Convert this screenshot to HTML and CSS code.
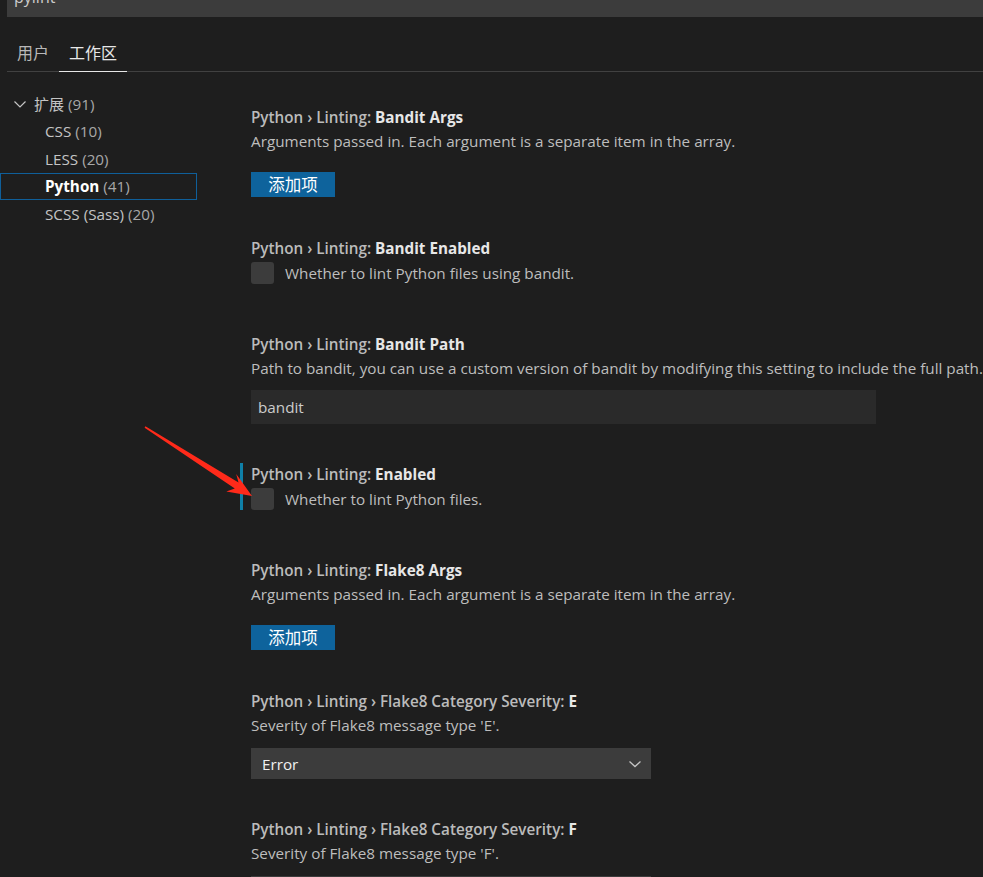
FILE: index.html
```html
<!DOCTYPE html>
<html lang="zh-CN">
<head>
<meta charset="utf-8">
<title>Settings</title>
<link rel="stylesheet" href="styles.css">
</head>
<body>
<div class="page">
  <div class="search"><div class="search-text">pylint</div></div>
  <div class="tabs">
    <div class="tab cjk">用户</div>
    <div class="tab cjk active">工作区</div>
  </div>
  <div class="main">
    <div class="tree">
      <div class="row group">
        <svg class="chev" width="16" height="16" viewBox="0 0 16 16"><path d="M2.5 5.5 L8 11 L13.5 5.5" fill="none" stroke="#c5c5c5" stroke-width="1.2"/></svg>
        <span class="cjk name">扩展</span><span class="count">&nbsp;(91)</span>
      </div>
      <div class="row child"><span class="name">CSS</span><span class="count">&nbsp;(10)</span></div>
      <div class="row child"><span class="name">LESS</span><span class="count">&nbsp;(20)</span></div>
      <div class="row child selected"><span class="name strong">Python</span><span class="count">&nbsp;(41)</span></div>
      <div class="row child"><span class="name">SCSS (Sass)</span><span class="count">&nbsp;(20)</span></div>
    </div>
    <div class="content">
      <div class="setting gap-button">
        <div class="title"><span class="cat">Python › Linting: </span><span class="label">Bandit Args</span></div>
        <div class="desc">Arguments passed in. Each argument is a separate item in the array.</div>
        <div class="button cjk">添加项</div>
      </div>
      <div class="setting gap-check">
        <div class="title"><span class="cat">Python › Linting: </span><span class="label">Bandit Enabled</span></div>
        <div class="check-row"><span class="checkbox"></span><span class="desc">Whether to lint Python files using bandit.</span></div>
      </div>
      <div class="setting gap-input">
        <div class="title"><span class="cat">Python › Linting: </span><span class="label">Bandit Path</span></div>
        <div class="desc nowrap">Path to bandit, you can use a custom version of bandit by modifying this setting to include the full path.</div>
        <div class="input">bandit</div>
      </div>
      <div class="setting gap-check focused">
        <div class="title"><span class="cat">Python › Linting: </span><span class="label">Enabled</span></div>
        <div class="check-row"><span class="checkbox"></span><span class="desc">Whether to lint Python files.</span></div>
      </div>
      <div class="setting gap-button">
        <div class="title"><span class="cat">Python › Linting: </span><span class="label">Flake8 Args</span></div>
        <div class="desc">Arguments passed in. Each argument is a separate item in the array.</div>
        <div class="button cjk">添加项</div>
      </div>
      <div class="setting gap-select">
        <div class="title"><span class="cat">Python › Linting › Flake8 Category Severity: </span><span class="label">E</span></div>
        <div class="desc">Severity of Flake8 message type 'E'.</div>
        <div class="select"><span>Error</span><svg width="14" height="14" viewBox="0 0 14 14"><path d="M1.5 4.5 L7 9.5 L12.5 4.5" fill="none" stroke="#c5c5c5" stroke-width="1.3"/></svg></div>
      </div>
      <div class="setting gap-select">
        <div class="title"><span class="cat">Python › Linting › Flake8 Category Severity: </span><span class="label">F</span></div>
        <div class="desc">Severity of Flake8 message type 'F'.</div>
        <div class="select last"></div>
      </div>
    </div>
  </div>
  <svg class="arrow" width="983" height="877" viewBox="0 0 983 877">
    <polygon points="145.4,426.3 238.5,482.6 236.2,474.0 252,496 226.3,491.5 234.8,488.6 144.6,427.7" fill="#ff2a1a"/>
  </svg>
</div>
</body>
</html>
```
FILE: styles.css
```css
html, body {
  margin: 0;
  padding: 0;
  background: #1e1e1e;
  height: 100%;
  overflow: hidden;
}
body {
  font-family: "Open Sans", "Noto Sans CJK SC", sans-serif;
  font-size: 15.25px;
  color: #cccccc;
}
.cjk {
  font-family: "Noto Sans CJK SC", sans-serif;
}
.page {
  position: relative;
  width: 983px;
  height: 877px;
  overflow: hidden;
}
.search {
  margin-left: 7px;
  height: 17px;
  background: #3c3c3c;
  overflow: hidden;
}
.search-text {
  margin-top: -13px;
  padding-left: 7px;
  font-size: 16px;
  line-height: 20px;
  color: #cccccc;
}
.tabs {
  margin-left: 7px;
  margin-top: 16px;
  display: flex;
  height: 38px;
  border-bottom: 1px solid #414141;
}
.tab {
  padding: 0 10px;
  height: 38px;
  line-height: 38px;
  font-size: 16px;
  color: #b8b8b8;
}
.tab.active {
  color: #e7e7e7;
  height: 38px;
  border-bottom: 1px solid #e7e7e7;
}
.main {
  display: flex;
}
.tree {
  width: 197px;
  flex: none;
  padding-top: 18px;
}
.row {
  height: 27.5px;
  display: flex;
  align-items: center;
  box-sizing: border-box;
  white-space: nowrap;
  color: #c4c4c4;
}
.row.group {
  padding-left: 12px;
}
.chev {
  margin-right: 6px;
}
.row.child {
  padding-left: 45px;
}
.row.selected {
  border: 1px solid #0f5f9a;
  padding-left: 44px;
}
.name.strong {
  font-weight: 700;
  color: #ffffff;
}
.count {
  color: #a8a8a8;
}
.row .cjk {
  font-size: 15px;
}
.content {
  flex: 1;
  padding-left: 43px;
  padding-top: 34px;
  min-width: 0;
}
.setting {
  border-left: 3px solid transparent;
  padding-left: 8px;
}
.setting.focused {
  border-left-color: #0f80a8;
}
.gap-button { margin-bottom: 40px; }
.gap-check { margin-bottom: 49px; }
.gap-input { margin-bottom: 39px; }
.gap-select { margin-bottom: 39px; }
.title {
  line-height: 22px;
  white-space: nowrap;
}
.cat {
  font-weight: 600;
  color: #bbbbbb;
}
.label {
  font-weight: 700;
  color: #e7e7e7;
}
.desc {
  margin-top: 2px;
  line-height: 22px;
  color: #bdbdbd;
}
.nowrap {
  white-space: nowrap;
}
.button {
  margin-top: 20px;
  width: 84px;
  height: 25px;
  line-height: 25px;
  text-align: center;
  background: #0e639c;
  color: #ffffff;
  font-size: 16.5px;
}
.check-row {
  margin-top: 3px;
  display: flex;
  align-items: center;
}
.check-row .desc {
  margin-top: 0;
}
.checkbox {
  width: 23px;
  height: 22px;
  border-radius: 3px;
  background: #3c3c3c;
  margin-right: 11px;
  flex: none;
}
.input {
  margin-top: 11px;
  width: 625px;
  height: 34px;
  line-height: 34px;
  box-sizing: border-box;
  padding-left: 7px;
  background: #2a2a2a;
  color: #cccccc;
}
.select {
  margin-top: 12px;
  width: 400px;
  height: 31px;
  box-sizing: border-box;
  padding: 0 9px 0 11px;
  display: flex;
  align-items: center;
  justify-content: space-between;
  background: #3c3c3c;
  color: #f0f0f0;
}
.arrow {
  position: absolute;
  left: 0;
  top: 0;
  pointer-events: none;
}
```
